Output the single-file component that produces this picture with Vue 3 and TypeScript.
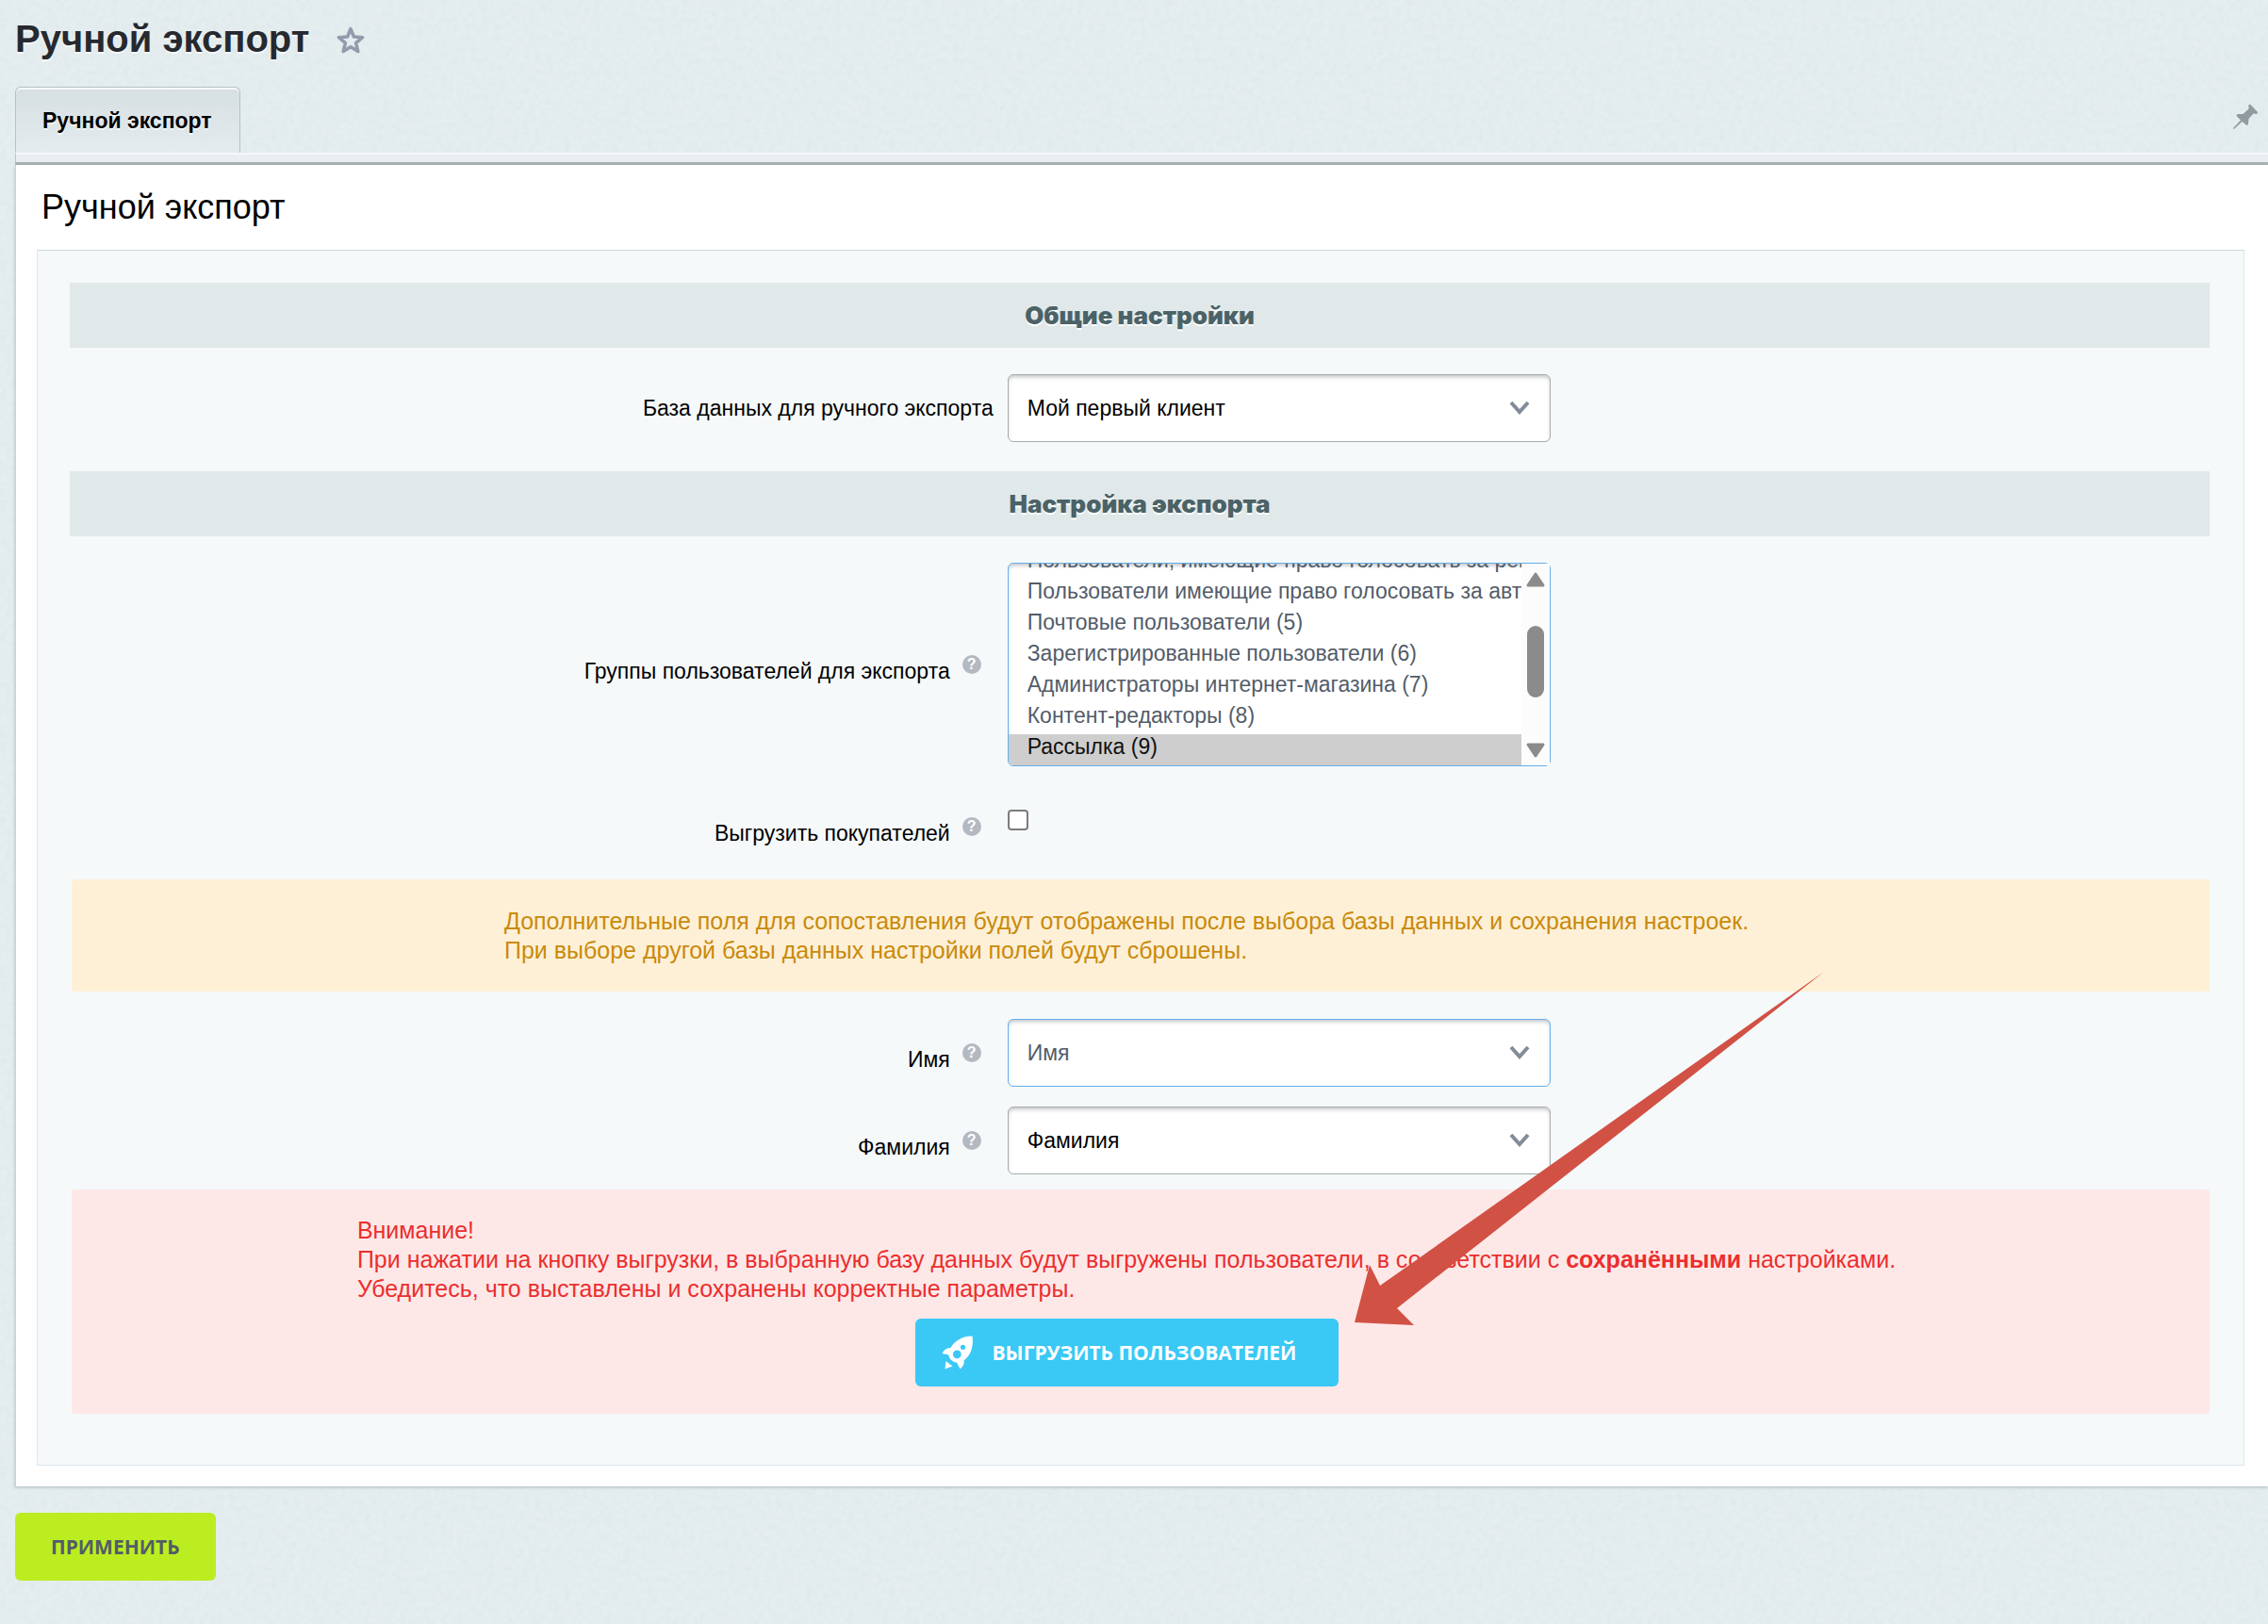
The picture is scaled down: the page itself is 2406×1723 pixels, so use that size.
<script setup lang="ts">
import { onMounted, ref } from 'vue'

interface Field {
  id: string
  label: string
  value: string
  active: boolean
}

const database = ref('Мой первый клиент')
const groups = [
  'Пользователи, имеющие право голосовать за рейтинг (3)',
  'Пользователи имеющие право голосовать за авторитет (4)',
  'Почтовые пользователи (5)',
  'Зарегистрированные пользователи (6)',
  'Администраторы интернет-магазина (7)',
  'Контент-редакторы (8)',
  'Рассылка (9)',
]
const selectedGroups = ref<string[]>(['Рассылка (9)'])
const exportBuyers = ref(false)
const fields = ref<Field[]>([
  { id: 'first-name', label: 'Имя', value: 'Имя', active: true },
  { id: 'last-name', label: 'Фамилия', value: 'Фамилия', active: false },
])

const groupList = ref<HTMLSelectElement | null>(null)
onMounted(() => {
  const list = groupList.value
  if (list) list.scrollTop = list.scrollHeight
})
</script>

<template>
  <main class="page">
    <header class="title-bar">
      <h1>Ручной экспорт</h1>
      <button class="icon-button" type="button" aria-label="В избранное">
        <svg width="32" height="36" viewBox="0 -2 32 36">
          <path
            d="M16 5.600l3.400 8.400 9.200.700-7 5.900 2.200 9-7.800-4.900-7.800 4.900 2.200-9-7-5.900 9.200-.700z"
            fill="none" stroke="#929bab" stroke-width="3.6" stroke-linejoin="round"
          />
        </svg>
      </button>
    </header>

    <nav class="tabs">
      <button class="tab" type="button">Ручной экспорт</button>
      <button class="icon-button pin" type="button" aria-label="Закрепить">
        <svg width="28" height="28" viewBox="0 0 28 28">
          <path
            d="M17.500 1L19.500 1 27 9 26.500 11 22.500 10.500 17.500 16 17 22 15.500 23 10.500 19 2 27 1 26 9 17.500 4.500 13 5.500 11 11.500 11 17.500 5.500z"
            fill="#919b9f"
          />
        </svg>
      </button>
    </nav>
    <div class="tab-strip"></div>

    <form class="panel" @submit.prevent>
      <h2>Ручной экспорт</h2>
      <div class="content">
        <h3>Общие настройки</h3>
        <div class="row">
          <label class="caption" for="database">База данных для ручного экспорта</label>
          <div class="select-box">
            <select id="database" v-model="database">
              <option>Мой первый клиент</option>
            </select>
            <svg class="chevron" width="22" height="18" viewBox="0 0 22 18">
              <path d="M2 3l9 10 9-10" fill="none" stroke="#828c99" stroke-width="4" />
            </svg>
          </div>
        </div>

        <h3 class="second">Настройка экспорта</h3>
        <div class="row">
          <div class="caption hinted">
            <label for="groups">Группы пользователей для экспорта</label>
            <button class="hint" type="button">?</button>
          </div>
          <div class="list-box">
            <select id="groups" ref="groupList" v-model="selectedGroups" multiple size="6">
              <option v-for="group in groups" :key="group">{{ group }}</option>
            </select>
            <svg class="scrollbar" width="30" height="214" viewBox="0 0 30 214">
              <rect width="30" height="214" fill="#fcfcfc" />
              <path d="M15 11l8 12H7z" fill="#8b8b8b" stroke="#8b8b8b" stroke-width="3" stroke-linejoin="round" />
              <rect x="6" y="66" width="18" height="76" rx="9" fill="#8b8b8b" />
              <path d="M15 204l8-12H7z" fill="#8b8b8b" stroke="#8b8b8b" stroke-width="3" stroke-linejoin="round" />
            </svg>
          </div>
        </div>

        <div class="row buyers">
          <div class="caption hinted">
            <label for="buyers">Выгрузить покупателей</label>
            <button class="hint" type="button">?</button>
          </div>
          <input id="buyers" v-model="exportBuyers" type="checkbox" />
        </div>

        <div class="note warning">
          <p>
            Дополнительные поля для сопоставления будут отображены после выбора базы данных и сохранения настроек.<br />
            При выборе другой базы данных настройки полей будут сброшены.
          </p>
        </div>

        <div class="mapping">
          <div v-for="field in fields" :key="field.id" class="row">
            <div class="caption hinted">
              <label :for="field.id">{{ field.label }}</label>
              <button class="hint" type="button">?</button>
            </div>
            <div class="select-box" :class="{ active: field.active }">
              <select :id="field.id" v-model="field.value">
                <option>{{ field.label }}</option>
              </select>
              <svg class="chevron" width="22" height="18" viewBox="0 0 22 18">
                <path d="M2 3l9 10 9-10" fill="none" stroke="#828c99" stroke-width="4" />
              </svg>
            </div>
          </div>
        </div>

        <div class="note danger">
          <p>
            Внимание!<br />
            При нажатии на кнопку выгрузки, в выбранную базу данных будут выгружены пользователи, в соответствии с
            <b>сохранёнными</b> настройками.<br />
            Убедитесь, что выставлены и сохранены корректные параметры.
          </p>
          <div class="launch">
            <button class="export" type="button">
              <svg width="34" height="42" viewBox="0 0 34 42">
                <path
                  fill="#fff" fill-rule="evenodd"
                  d="M32.500 3.500C23 3.500 14.500 7.500 9.500 16 5.500 15.500 2.500 18 .500 22L7.500 23.500C7.500 26.500 10.500 31 16 31.500L19.500 38.500C22.500 36 24.500 33 23.500 29.500 31 23.500 34 15 32.500 3.500zM22.500 12.700a2.600 2.600 0 1 1 0 5.200 2.600 2.600 0 1 1 0-5.200zM16.300 18.500a4.400 4.400 0 1 1 0 8.800 4.400 4.400 0 1 1 0-8.800z"
                />
                <path fill="#fff" d="M4.500 30L11.500 35.500 3.500 38.500z" />
              </svg>
              Выгрузить пользователей
            </button>
            <svg class="pointer" width="500" height="378" viewBox="0 0 500 378" aria-hidden="true">
              <path d="M1 373L17 312 28 334 499 1 46 358 64 376z" fill="#d15145" />
            </svg>
          </div>
        </div>
      </div>
    </form>

    <button class="apply" type="button">Применить</button>
  </main>
</template>

<style>
body {
  margin: 0;
}
</style>

<style scoped>
.page {
  box-sizing: border-box;
  min-height: 100vh;
  padding: 15px 0 44px 16px;
  overflow: hidden;
  font-family: 'Liberation Sans', Arial, sans-serif;
  font-size: 23px;
  line-height: 26px;
  color: #000;
  background-color: #e5edef;
  background-image: url("data:image/svg+xml,%3Csvg xmlns='http://www.w3.org/2000/svg' width='256' height='256'%3E%3Cfilter id='n' x='0' y='0' width='100%25' height='100%25'%3E%3CfeTurbulence type='fractalNoise' baseFrequency='.16' numOctaves='2' stitchTiles='stitch'/%3E%3CfeColorMatrix values='0 0 0 0 .6 0 0 0 0 .72 0 0 0 0 .72 .45 0 0 0 -.16'/%3E%3C/filter%3E%3Crect width='256' height='256' filter='url(%23n)'/%3E%3C/svg%3E");
}

h1,
h2,
h3,
p {
  margin: 0;
}

button,
select {
  font: inherit;
}

button {
  padding: 0;
  border: 0;
  cursor: pointer;
}

.title-bar {
  display: flex;
  align-items: center;
  gap: 28px;
  height: 52px;
}

h1 {
  font-size: 40px;
  line-height: 46px;
  color: #26292f;
  text-shadow: 0 2px 0 rgba(255, 255, 255, 0.7);
}

.icon-button {
  display: flex;
  background: none;
}

.tabs {
  display: flex;
  justify-content: space-between;
  align-items: flex-start;
  margin-top: 25px;
}

.tab {
  height: 70px;
  padding: 0 29px 0 28px;
  border: 1px solid #b6c1c5;
  border-bottom: 0;
  border-radius: 6px 6px 0 0;
  font-weight: bold;
  color: #000;
  text-shadow: 0 2px 0 rgba(255, 255, 255, 0.7);
  background: linear-gradient(#d6dfe2, #e5ebee);
  box-shadow: inset 0 2px 0 #f6f9fa;
}

.pin {
  padding: 18px 10px 0 0;
}

.tab-strip {
  height: 8px;
  border-top: 2px solid #f5f8f9;
  border-bottom: 3px solid #a9b1b3;
  border-left: 1px solid #b6c1c5;
  background: #e8eef1;
}

.panel {
  padding: 25px 25px 22px 22px;
  border-left: 1px solid #cbd5d8;
  background: #fff;
  box-shadow: 0 1px 3px rgba(120, 140, 145, 0.5);
}

h2 {
  padding-left: 5px;
  font-size: 36px;
  font-weight: normal;
  line-height: 40px;
}

.content {
  margin-top: 25px;
  padding: 34px 36px 54px 34px;
  border: 1px solid #dce7ed;
  border-top-color: #cdd8db;
  background: #f5f9fa;
}

h3 {
  margin-bottom: 28px;
  font-family: Inter, 'Liberation Sans', sans-serif;
  font-size: 26px;
  font-weight: 900;
  line-height: 69px;
  text-align: center;
  color: #4b6267;
  text-shadow: 0 2px 0 #fff;
  background: #e0e8e9;
}

h3.second {
  margin-top: 31px;
}

.row {
  display: grid;
  grid-template-columns: 39fr 50fr;
  align-items: center;
}

.caption {
  padding-right: 15px;
  text-align: right;
}

.hinted {
  display: flex;
  justify-content: flex-end;
  align-items: center;
  gap: 13px;
  height: 36px;
  padding-right: 28px;
}

.hinted label {
  padding-top: 14px;
}

.hint {
  width: 20px;
  height: 20px;
  border-radius: 50%;
  font-size: 16px;
  font-weight: bold;
  line-height: 20px;
  color: #fff;
  background: #b4b9c1;
}

.select-box,
.list-box {
  position: relative;
  width: 100%;
  max-width: 576px;
}

select {
  display: block;
  box-sizing: border-box;
  width: 100%;
  border: 1px solid #a5abae;
  border-radius: 6px;
  color: #000;
  background: #fff;
  outline: 0;
}

.select-box select {
  height: 72px;
  padding: 0 60px 0 20px;
  appearance: none;
  box-shadow: inset 0 3px 4px -1px rgba(100, 110, 115, 0.4);
}

.active select,
.list-box select {
  border-color: #66afe9;
  color: #535c69;
}

.chevron {
  position: absolute;
  top: 27px;
  right: 22px;
  pointer-events: none;
}

.list-box select {
  height: 216px;
  padding: 0;
  scrollbar-width: none;
  box-shadow: inset 0 3px 4px -1px rgba(100, 110, 115, 0.4);
}

.list-box option {
  min-height: 26px;
  padding: 0 0 6px 20px;
}

.scrollbar {
  position: absolute;
  top: 1px;
  right: 1px;
}

.buyers {
  align-items: start;
  margin-top: 46px;
}

.buyers input {
  box-sizing: border-box;
  width: 22px;
  height: 22px;
  margin: 0;
  border: 2px solid #7c7c7c;
  border-radius: 4px;
  appearance: none;
  background: #fff;
}

.buyers input:checked {
  background: #3ac8f5;
}

.note {
  margin-left: 2px;
  padding-right: 30px;
  border-radius: 3px;
  font-size: 25px;
  line-height: 31px;
  text-align: center;
}

.note p {
  display: inline-block;
  text-align: left;
}

.warning {
  margin-top: 38px;
  padding-top: 29px;
  padding-bottom: 28px;
  color: #c98a0b;
  background: #fef0d6;
}

.mapping {
  display: grid;
  gap: 21px;
  margin: 29px 0 16px;
}

.danger {
  padding-top: 28px;
  padding-bottom: 29px;
  color: #ec2e2e;
  background: #fde8e7;
}

.launch {
  position: relative;
  width: 449px;
  margin: 16px auto 0;
}

.export,
.apply {
  height: 72px;
  border-radius: 6px;
  font-family: 'Open Sans', sans-serif;
  font-size: 21px;
  font-weight: bold;
  text-transform: uppercase;
}

.export {
  display: flex;
  align-items: center;
  gap: 20px;
  width: 100%;
  padding-left: 28px;
  color: #fff;
  background: #3ac8f5;
}

.pointer {
  position: absolute;
  right: -516px;
  bottom: 63px;
  pointer-events: none;
}

.apply {
  margin-top: 28px;
  padding: 0 38px;
  color: #535c69;
  background: #bbed21;
}
</style>
